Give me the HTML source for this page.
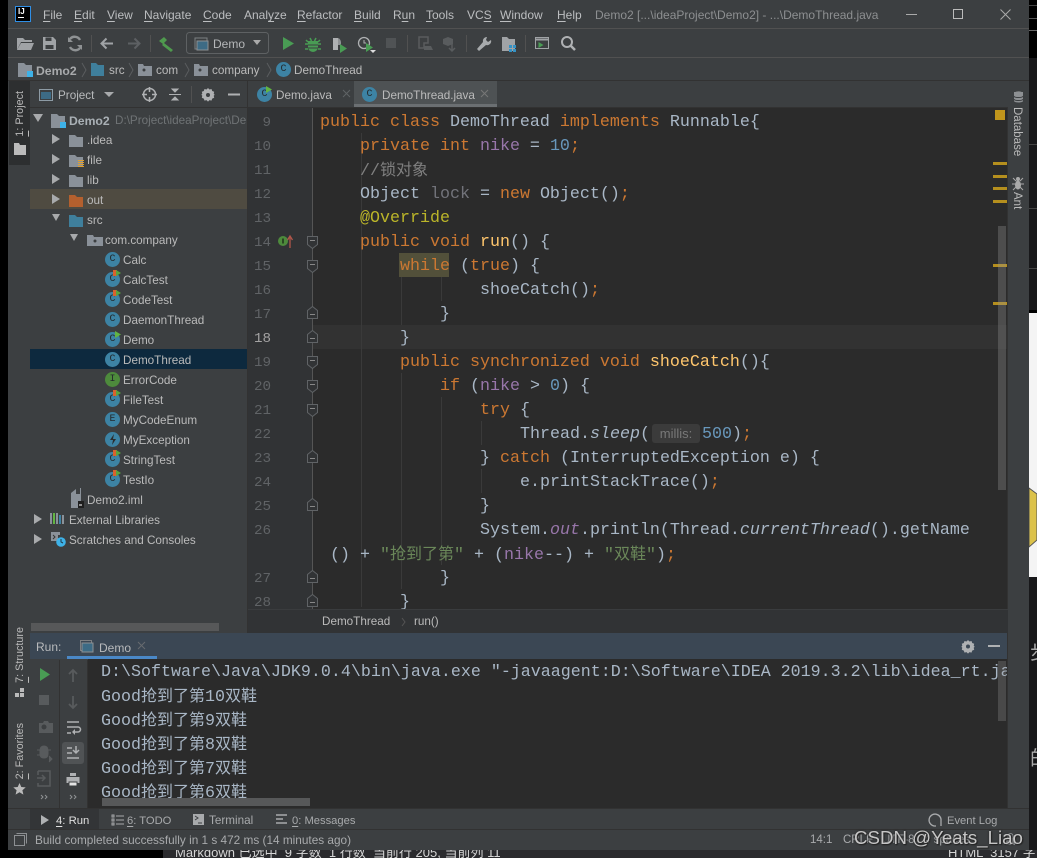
<!DOCTYPE html>
<html><head><meta charset="utf-8"><style>
html,body{margin:0;padding:0;background:#000;width:1037px;height:858px;overflow:hidden}
*{box-sizing:border-box}
#r{position:absolute;left:0;top:0;width:1037px;height:858px;overflow:hidden;font-family:"Liberation Sans","Noto Sans CJK SC",sans-serif}
.a{position:absolute}
.t{position:absolute;white-space:pre;font-size:11.7px;line-height:20px;color:#bbb;margin-top:1px}
.m{top:5px;color:#bcbec0;font-size:12px;margin-top:0}
u{text-decoration:underline;text-underline-offset:2px}
.c{position:absolute;white-space:pre;left:0;margin-top:2px;font-family:"Liberation Mono","Noto Sans CJK SC",monospace;font-size:16.67px;line-height:24px;color:#a9b7c6}
.c i,.c b{font-weight:400}
.k{color:#cc7832}.s{color:#6a8759}.f{color:#9876aa}.n{color:#6897bb}.y{color:#ffc66d}.an{color:#bbb529}.g{color:#808080}
.z{font-size:16px}
.ln{position:absolute;left:240px;width:31px;margin-top:1px;text-align:right;font-family:"Liberation Mono",monospace;font-size:14.2px;line-height:24px;color:#606366}
.i{position:absolute;left:0;top:0;overflow:visible}
.ci{position:absolute;width:15px;height:15px;border-radius:50%;background:#3d83a4;color:#24292c;font:10px/15px "Liberation Mono",monospace;text-align:center}
.ci.gr{background:#4d8a3c}
.bd{position:absolute;left:8px;top:-2px;width:8px;height:6px}
.bd:before{content:"";position:absolute;left:0;top:0;width:4px;height:6px;background:#d8622e}
.bd:after{content:"";position:absolute;right:0;top:0;border-left:5px solid #58a53d;border-top:3px solid transparent;border-bottom:3px solid transparent}
.v{position:absolute;writing-mode:vertical-rl;transform:rotate(180deg);white-space:pre;font-size:10.8px;color:#bbb;line-height:14px}
.mk{position:absolute;left:993px;width:14px;height:3px;background:#b58f1e}
.ig{position:absolute;width:1px;background:#3a3a3a}
.cn{position:absolute;left:101px;margin-top:2px;white-space:pre;font-family:"Liberation Mono","Noto Sans CJK SC",monospace;font-size:16.67px;line-height:24px;color:#a9b7c6}
.st{position:absolute;white-space:pre;font-size:11.8px;line-height:20px;color:#a8aaac;top:830px}
</style></head><body><div id="r">

<!-- outside window backdrop -->
<div class="a" style="left:1029px;top:0;width:8px;height:58px;background:#000"></div>
<div class="a" style="left:1029px;top:5px;width:8px;height:1px;background:#444"></div>
<div class="a" style="left:1029px;top:18px;width:8px;height:1px;background:#555"></div>
<div class="a" style="left:1029px;top:30px;width:8px;height:1px;background:#666"></div>
<div class="a" style="left:1029px;top:58px;width:8px;height:252px;background:#18181a"></div>
<div class="a" style="left:1029px;top:144px;width:8px;height:1px;background:#444"></div>
<div class="a" style="left:1029px;top:208px;width:8px;height:1px;background:#444"></div>
<div class="a" style="left:1029px;top:268px;width:8px;height:1px;background:#444"></div>
<div class="a" style="left:1029px;top:313px;width:8px;height:264px;background:#f4f4f4"></div>
<svg class="a" style="left:1029px;top:485px" width="8" height="66"><path d="M0 3L8 9V55L0 62Z" fill="#dcc24a" stroke="#555" stroke-width="1"/></svg>
<div class="a" style="left:1029px;top:577px;width:8px;height:281px;background:#18181a"></div>
<div class="a" style="left:1030px;top:639px;width:7px;height:24px;color:#aaa;font:20px/24px 'Noto Sans CJK SC',sans-serif;overflow:hidden">步</div>
<div class="a" style="left:1030px;top:745px;width:7px;height:24px;color:#aaa;font:20px/24px 'Noto Sans CJK SC',sans-serif;overflow:hidden">的</div>
<div class="a" style="left:163px;top:850px;width:874px;height:8px;background:#2b2b2e"></div>
<div class="t" style="left:175px;top:850px;margin:0;height:8px;overflow:hidden;color:#d5d5d5;font-size:13px;line-height:8px;width:400px"><span style="position:relative;top:-1px">Markdown 已选中  9 字数  1 行数  当前行 205, 当前列 11</span></div>
<div class="t" style="left:948px;top:850px;margin:0;height:8px;overflow:hidden;color:#d5d5d5;font-size:13px;line-height:8px;width:89px"><span style="position:relative;top:-1px">HTML  3157 字</span></div>

<!-- window base -->
<div class="a" style="left:8px;top:0;width:1021px;height:850px;background:#3c3f41"></div>
<div class="a" style="left:8px;top:28px;width:1021px;height:1px;background:#515151"></div>
<div class="a" style="left:8px;top:57px;width:1021px;height:1px;background:#515151"></div>
<div class="a" style="left:8px;top:80px;width:1021px;height:1px;background:#323232"></div>

<!-- title bar -->
<div class="a" style="left:15px;top:6px;width:16px;height:16px;background:#000;border:1px solid #2f8fe6"></div>
<div class="a" style="left:18px;top:7px;color:#fff;font:bold 8px/10px 'Liberation Sans',sans-serif;white-space:pre">IJ</div>
<div class="a" style="left:18px;top:17px;width:6px;height:1px;background:#fff"></div>
<div class="t m" style="left:43px"><u>F</u>ile</div>
<div class="t m" style="left:74px"><u>E</u>dit</div>
<div class="t m" style="left:107px"><u>V</u>iew</div>
<div class="t m" style="left:144px"><u>N</u>avigate</div>
<div class="t m" style="left:203px"><u>C</u>ode</div>
<div class="t m" style="left:244px">Anal<u>y</u>ze</div>
<div class="t m" style="left:297px"><u>R</u>efactor</div>
<div class="t m" style="left:354px"><u>B</u>uild</div>
<div class="t m" style="left:393px">R<u>u</u>n</div>
<div class="t m" style="left:426px"><u>T</u>ools</div>
<div class="t m" style="left:467px">VC<u>S</u></div>
<div class="t m" style="left:500px"><u>W</u>indow</div>
<div class="t m" style="left:557px"><u>H</u>elp</div>
<div class="t m" style="left:595px;color:#8d8f91">Demo2 [...\ideaProject\Demo2] - ...\DemoThread.java</div>
<svg class="i" width="1037" height="58" fill="none">
<path d="M906 14.5H917" stroke="#aaa"/><rect x="953.5" y="9.5" width="9" height="9" stroke="#bbb"/>
<path d="M1000.5 9.5L1010.5 19.5M1010.5 9.5L1000.5 19.5" stroke="#aaa"/>
<!-- toolbar -->
<path d="M17 38h6l2 2h7v2H21l-4 8z" fill="#a0a3a6"/><path d="M21 43h13l-3 7H17z" fill="#a0a3a6"/>
<path d="M43 37h10l3 3v10H43z" fill="#a0a3a6"/><rect x="45.500" y="37.500" width="6" height="3.500" fill="#3c3f41"/><rect x="45.500" y="45" width="8" height="4" fill="#3c3f41"/>
<path d="M80 40a6 6 0 0 0-10-1M70 47a6 6 0 0 0 10 1" stroke="#8f9294" stroke-width="2.400"/><path d="M68 37v5h5zM82 50v-5h-5z" fill="#8f9294"/>
<path d="M113 43.500h-11M106.500 38.500l-5 5 5 5" stroke="#a0a3a6" stroke-width="2"/>
<path d="M128 43.500h11M134.500 38.500l5 5-5 5" stroke="#5d6063" stroke-width="2"/>
<path d="M159 41l5-4 3 3-4 4zM164 43l9 7-2 2-9-7z" fill="#4f9a4e"/>
<rect x="186.500" y="32.500" width="82" height="21" rx="3" stroke="#5e6163"/>
<rect x="195" y="38" width="12" height="11" stroke="#7d8083"/><rect x="197" y="41" width="11" height="9" fill="#3d6b85" stroke="#8d9093"/>
<path d="M253 40h8l-4 5z" fill="#aaa"/>
<path d="M283 37l11 6.500-11 6.500z" fill="#499c54"/>
<path d="M308 41h10v6a5 5 0 0 1-10 0z" fill="#499c54"/><path d="M310 38l1.500 3M316 38l-1.500 3M305 44h3M318 44h3M305 49h3M318 49h3M306 40l2 2M320 40l-2 2" stroke="#499c54" stroke-width="1.500"/><path d="M308 45h10M308 48h10" stroke="#3c3f41"/>
<path d="M333 38h5v12h-5z" fill="#afb1b3"/><path d="M338 38a5 5 0 0 1 3 4v3h-3z" fill="#8f9294"/><path d="M340 44l7 4.500-7 4.500z" fill="#499c54"/>
<circle cx="364" cy="43" r="5.500" stroke="#afb1b3" stroke-width="1.300"/><path d="M364 40v3h2" stroke="#afb1b3"/><path d="M366 43l7 4.500-7 4.500z" fill="#499c54"/><path d="M370 50h6l-3 3z" fill="#ddd"/>
<rect x="386" y="38" width="10" height="10" fill="#505355"/>
<path d="M419 37h9v6h-4v5h-5z" stroke="#595c5e" stroke-width="1.500"/><path d="M424 46h7l2 4h-9z" fill="#595c5e"/>
<path d="M443 39l5-2 5 2v5l-5 2-5-2z" fill="#595c5e"/><path d="M452 44v7M449 48l3 3 3-3" stroke="#595c5e" stroke-width="1.500"/>
<path d="M487 37a4 4 0 0 0-4 5l-6 7 2 2 7-6a4 4 0 0 0 5-5l-3 2-2-2z" fill="#a8abad"/>
<path d="M502 37h5l2 2h6v12h-13z" fill="#a0a3a6"/><rect x="509" y="45" width="3" height="3" fill="#3592c4"/><rect x="513" y="45" width="3" height="3" fill="#3592c4"/><rect x="513" y="49" width="3" height="3" fill="#3592c4"/><rect x="509" y="49" width="3" height="3" fill="#3592c4"/>
<rect x="535.500" y="37.500" width="13" height="11" stroke="#a0a3a6"/><path d="M535.500 39.500h13" stroke="#a0a3a6" stroke-width="2"/><path d="M538.500 42l5 3-5 3z" fill="#499c54"/>
<circle cx="567" cy="42" r="5" stroke="#afb1b3" stroke-width="2"/><path d="M571 46l4 4" stroke="#afb1b3" stroke-width="2.500"/>
<path d="M91.500 35v17M150.500 35v17M407.500 35v17M466.500 35v17M525.500 35v17" stroke="#515151"/>
</svg>
<div class="t" style="left:213px;top:33px;color:#b5b7b9;font-size:12px">Demo</div>

<!-- breadcrumb -->
<svg class="i" width="400" height="82" fill="none">
<path d="M18 63h6l2 2h6v12H18z" fill="#8a9199"/><rect x="27" y="71" width="6" height="6" fill="#3eb2e8"/>
<path d="M91 63h5l2 2h6v11H91z" fill="#3f7f9c"/>
<path d="M138 64h5l1 2h8v10h-14z" fill="#8a9199"/><circle cx="144" cy="70" r="1.500" fill="#3c3f41"/>
<path d="M194 64h5l1 2h8v10h-14z" fill="#8a9199"/><circle cx="200" cy="70" r="1.500" fill="#3c3f41"/>
<path d="M82 63l4 7-4 7M129 63l4 7-4 7M185 63l4 7-4 7M267 63l4 7-4 7" stroke="#5a5d5f"/>
</svg>
<div class="t" style="left:36px;top:60px;font-weight:bold;font-size:12.2px;color:#a8aaac">Demo2</div>
<div class="t" style="left:109px;top:60px">src</div>
<div class="t" style="left:156px;top:60px">com</div>
<div class="t" style="left:212px;top:60px">company</div>
<div class="ci" style="left:276px;top:62px">C</div>
<div class="t" style="left:294px;top:60px">DemoThread</div>

<!-- left strip -->
<div class="a" style="left:8px;top:81px;width:22px;height:769px;background:#3c3f41"></div>
<div class="a" style="left:9px;top:81px;width:21px;height:84px;background:#2d2f30"></div>
<div class="v" style="left:13px;top:91px"><u>1</u>: Project</div>
<svg class="i" width="30" height="170"><path d="M14 143h5l1 2h6v10H14z" fill="#bbb"/></svg>
<div class="v" style="left:13px;top:627px"><u>7</u>: Structure</div>
<svg class="i" style="top:0" width="30" height="800"><rect x="15" y="693" width="4" height="4" fill="#bbb"/><rect x="20" y="693" width="4" height="4" fill="#bbb"/><rect x="20" y="688" width="4" height="4" fill="#bbb"/>
<path d="M19.500 783l1.800 4 4.400.4-3.300 2.900 1 4.300-3.900-2.300-3.900 2.300 1-4.300-3.300-2.900 4.400-.4z" fill="#bbb"/></svg>
<div class="v" style="left:13px;top:723px"><u>2</u>: Favorites</div>

<!-- project panel -->
<div class="a" style="left:30px;top:81px;width:217px;height:552px;background:#3c3f41"></div>
<div class="a" style="left:30px;top:107px;width:999px;height:1px;background:#323232"></div>
<div class="a" style="left:30px;top:189px;width:217px;height:20px;background:#4f4b41"></div>
<div class="a" style="left:30px;top:349px;width:217px;height:20px;background:#0d293e"></div>
<div class="a" style="left:247px;top:81px;width:1px;height:552px;background:#323232"></div>
<svg class="i" width="260" height="560" fill="none">
<rect x="39.500" y="89.500" width="13" height="11" stroke="#8d9ba5"/><rect x="41" y="92" width="10" height="7" fill="#3d6b85"/>
<path d="M104 92h10l-5 5z" fill="#a8aaac"/>
<circle cx="149.500" cy="94.500" r="6" stroke="#afb1b3" stroke-width="1.500"/><path d="M149.500 87v5M149.500 97v5M142 94.500h5M152 94.500h5" stroke="#afb1b3" stroke-width="1.500"/>
<path d="M169 94.500h12M172 89h6l-3 3zM172 100h6l-3-3z" stroke="#afb1b3" fill="#afb1b3"/>
<path d="M191.500 86v17" stroke="#515151"/>
<path d="M208 88l1.500 1.500 2-.5.700 2 2 .8-.5 2 1 1-1 1 .5 2-2 .8-.7 2-2-.5-1.500 1.500-1.500-1.500-2 .5-.7-2-2-.8.500-2-1-1 1-1-.5-2 2-.8.700-2 2 .5z" fill="#afb1b3"/><circle cx="208" cy="95" r="2" fill="#3c3f41"/>
<path d="M228 94.500h12" stroke="#afb1b3" stroke-width="2"/>
<!-- arrows -->
<path d="M33 114h10l-5 8z" fill="#a8aaac"/>
<path d="M52 134l8 5-8 5zM52 154l8 5-8 5zM52 174l8 5-8 5zM52 194l8 5-8 5z" fill="#a8aaac"/>
<path d="M52 214h8l-4 7zM70 234h8l-4 7z" fill="#a8aaac"/>
<path d="M34 514l8 5-8 5zM34 534l8 5-8 5z" fill="#a8aaac"/>
<!-- folders -->
<path d="M51 114h6l2 2h6v12H51z" fill="#8a9199"/><rect x="60" y="122" width="6" height="6" fill="#3eb2e8"/>
<path d="M69 135h6l2 2h6v10H69z" fill="#8a9199"/>
<path d="M69 155h6l2 2h6v10H69z" fill="#8a9199"/><path d="M78 160.500h6M78 162.500h6M78 164.500h6M78 166.500h6" stroke="#e0a030"/>
<path d="M69 175h6l2 2h6v10H69z" fill="#8a9199"/>
<path d="M69 195h6l2 2h6v10H69z" fill="#b4602e"/>
<path d="M69 215h6l2 2h6v10H69z" fill="#3f7f9c"/>
<path d="M87 235h6l1 2h9v9H87z" fill="#8a9199"/><circle cx="95" cy="241" r="1.500" fill="#3c3f41"/>
<!-- iml -->
<path d="M71 493l5-4v5h4v-6h1v20H71z" fill="#8a9199"/><rect x="78" y="501" width="6" height="7" fill="#1f1f1f"/><path d="M79 505h3" stroke="#fff"/>
<path d="M51 513v11M54 513v11M57 513v11M60 515v9M63 515v9" stroke="#8a9199" stroke-width="2"/><path d="M54 513v11" stroke="#62b543" stroke-width="2"/><path d="M60 515v9" stroke="#3d83a4" stroke-width="2"/>
<path d="M51 532h9v3h-9v-3zM51 535h7v6h-7z" fill="#8a9199"/><path d="M53 535l2 2-2 2" stroke="#333"/><circle cx="61" cy="542" r="4.800" fill="#3eb2e8"/><path d="M61 539v3l2 1" stroke="#1f3a4a"/>
</svg>
<div class="t" style="left:58px;top:85px;color:#b8babc">Project</div>

<div class="t" style="left:69px;top:110px;font-weight:bold;font-size:12.2px;color:#a9b0b5">Demo2</div>
<div class="t" style="left:115px;top:110px;width:132px;overflow:hidden;color:#6f7375;font-size:11.7px">D:\Project\ideaProject\Demo2</div>
<div class="t" style="left:87px;top:130px">.idea</div>
<div class="t" style="left:87px;top:150px">file</div>
<div class="t" style="left:87px;top:170px">lib</div>
<div class="t" style="left:87px;top:190px">out</div>
<div class="t" style="left:87px;top:210px">src</div>
<div class="t" style="left:105px;top:230px">com.company</div>
<div class="ci" style="left:105px;top:252px">C</div><div class="t" style="left:123px;top:250px">Calc</div>
<div class="ci" style="left:105px;top:272px">C<span class="bd"></span></div><div class="t" style="left:123px;top:270px">CalcTest</div>
<div class="ci" style="left:105px;top:292px">C<span class="bd"></span></div><div class="t" style="left:123px;top:290px">CodeTest</div>
<div class="ci" style="left:105px;top:312px">C</div><div class="t" style="left:123px;top:310px">DaemonThread</div>
<div class="ci" style="left:105px;top:332px">C</div><svg class="i" width="125" height="345"><path d="M115 331l6 3.500-6 3.500z" fill="#62b543"/></svg><div class="t" style="left:123px;top:330px">Demo</div>
<div class="ci" style="left:105px;top:352px">C</div><div class="t" style="left:123px;top:350px">DemoThread</div>
<div class="ci gr" style="left:105px;top:372px">I</div><div class="t" style="left:123px;top:370px">ErrorCode</div>
<div class="ci" style="left:105px;top:392px">C<span class="bd"></span></div><div class="t" style="left:123px;top:390px">FileTest</div>
<div class="ci" style="left:105px;top:412px">E</div><div class="t" style="left:123px;top:410px">MyCodeEnum</div>
<div class="ci" style="left:105px;top:432px"></div><svg class="i" width="125" height="450"><path d="M114 434l-4 6h3l-1 5 4-6h-3z" fill="#2b2d2e"/></svg><div class="t" style="left:123px;top:430px">MyException</div>
<div class="ci" style="left:105px;top:452px">C<span class="bd"></span></div><div class="t" style="left:123px;top:450px">StringTest</div>
<div class="ci" style="left:105px;top:472px">C<span class="bd"></span></div><div class="t" style="left:123px;top:470px">TestIo</div>
<div class="t" style="left:87px;top:490px">Demo2.iml</div>
<div class="t" style="left:69px;top:510px">External Libraries</div>
<div class="t" style="left:69px;top:530px">Scratches and Consoles</div>
<div class="a" style="left:31px;top:623px;width:188px;height:8px;background:#575859"></div>

<!-- tabs -->
<div class="a" style="left:248px;top:81px;width:781px;height:26px;background:#3c3f41"></div>
<div class="a" style="left:354px;top:81px;width:143px;height:26px;background:#4e5254"></div>
<div class="a" style="left:354px;top:104px;width:143px;height:3px;background:#6b6f72"></div>
<div class="ci" style="left:257px;top:87px">C</div>
<svg class="i" width="500" height="100" fill="none"><path d="M266 86l6 3.500-6 3.500z" fill="#62b543"/><path d="M343 90l7 7M350 90l-7 7" stroke="#5f6365"/><path d="M481 90l7 7M488 90l-7 7" stroke="#777"/></svg>
<div class="t" style="left:276px;top:85px">Demo.java</div>
<div class="ci" style="left:362px;top:87px;background:#3d83a4">C</div>
<div class="t" style="left:382px;top:85px">DemoThread.java</div>

<!-- editor -->
<div class="a" style="left:248px;top:108px;width:65px;height:501px;background:#313335"></div>
<div class="a" id="ed" style="left:313px;top:108px;width:695px;height:501px;background:#2b2b2b"></div>
<div class="a" style="left:313px;top:325px;width:695px;height:24px;background:#323232"></div>
<div class="a" style="left:399px;top:253px;width:50px;height:24px;background:#52503a"></div>
<div class="ig" style="left:361px;top:133px;height:474px"></div>
<div class="ig" style="left:401px;top:277px;height:48px"></div>
<div class="ig" style="left:441px;top:277px;height:24px"></div>
<div class="ig" style="left:401px;top:373px;height:216px"></div>
<div class="ig" style="left:441px;top:397px;height:168px"></div>
<div class="ig" style="left:481px;top:421px;height:24px"></div>
<div class="ig" style="left:481px;top:469px;height:24px"></div>

<div class="a" style="left:0;top:0;width:998px;height:609px;overflow:hidden;pointer-events:none">
<div class="ln" style="top:110px">9</div><div class="ln" style="top:134px">10</div><div class="ln" style="top:158px">11</div><div class="ln" style="top:182px">12</div><div class="ln" style="top:206px">13</div><div class="ln" style="top:230px">14</div><div class="ln" style="top:254px">15</div><div class="ln" style="top:278px">16</div><div class="ln" style="top:302px">17</div><div class="ln" style="top:326px;color:#a4a3a3">18</div><div class="ln" style="top:350px">19</div><div class="ln" style="top:374px">20</div><div class="ln" style="top:398px">21</div><div class="ln" style="top:422px">22</div><div class="ln" style="top:446px">23</div><div class="ln" style="top:470px">24</div><div class="ln" style="top:494px">25</div><div class="ln" style="top:518px">26</div><div class="ln" style="top:566px">27</div><div class="ln" style="top:590px">28</div>

<div class="c" style="top:109px;left:320px"><span class="k">public class </span>DemoThread <span class="k">implements </span>Runnable{</div>
<div class="c" style="top:133px;left:360px"><span class="k">private int </span><span class="f">nike</span> = <span class="n">10</span><span class="k">;</span></div>
<div class="c g" style="top:157px;left:360px;color:#808080">//<span class="z">锁对象</span></div>
<div class="c" style="top:181px;left:360px">Object <span style="color:#72737a">lock</span> = <span class="k">new </span>Object()<span class="k">;</span></div>
<div class="c an" style="top:205px;left:360px;color:#bbb529">@Override</div>
<div class="c" style="top:229px;left:360px"><span class="k">public void </span><span class="y">run</span>() {</div>
<div class="c" style="top:253px;left:400px"><span class="k">while </span>(<span class="k">true</span>) {</div>
<div class="c" style="top:277px;left:480px">shoeCatch()<span class="k">;</span></div>
<div class="c" style="top:301px;left:440px">}</div>
<div class="c" style="top:325px;left:400px">}</div>
<div class="c" style="top:349px;left:400px"><span class="k">public synchronized void </span><span class="y">shoeCatch</span>(){</div>
<div class="c" style="top:373px;left:440px"><span class="k">if </span>(<span class="f">nike</span> &gt; <span class="n">0</span>) {</div>
<div class="c" style="top:397px;left:480px"><span class="k">try </span>{</div>
<div class="c" style="top:421px;left:520px">Thread.<i>sleep</i>(</div>
<div class="a" style="left:652px;top:424px;width:48px;height:19px;background:#3b3b3b;border-radius:3px;color:#787878;font-size:13px;line-height:19px;text-align:center">millis:</div>
<div class="c" style="top:421px;left:702px"><span class="n">500</span>)<span class="k">;</span></div>
<div class="c" style="top:445px;left:480px">} <span class="k">catch </span>(InterruptedException e) {</div>
<div class="c" style="top:469px;left:520px">e.printStackTrace()<span class="k">;</span></div>
<div class="c" style="top:493px;left:480px">}</div>
<div class="c" style="top:517px;left:480px">System.<i class="f">out</i>.println(Thread.<i>currentThread</i>().getName</div>
<div class="c" style="top:541px;left:330px">() + <span class="s">"<span class="z">抢到了第</span>"</span> + (<span class="f">nike</span>--) + <span class="s">"<span class="z">双鞋</span>"</span>)<span class="k">;</span></div>
<div class="c" style="top:565px;left:440px">}</div>
<div class="c" style="top:589px;left:400px">}</div>
</div>

<svg class="i" width="340" height="609" fill="none" style="overflow:hidden">
<path d="M312.500 108V609" stroke="#555"/>
<g fill="#313335" stroke="#606366">
<path d="M307.500 236.500h10v8l-5 4-5-4z"/><path d="M307.500 260.500h10v8l-5 4-5-4z"/>
<path d="M307.500 318.500v-8l5-4 5 4v8z"/><path d="M307.500 342.500v-8l5-4 5 4v8z"/>
<path d="M307.500 356.500h10v8l-5 4-5-4z"/><path d="M307.500 380.500h10v8l-5 4-5-4z"/><path d="M307.500 404.500h10v8l-5 4-5-4z"/>
<path d="M307.500 462.500v-8l5-4 5 4v8z"/><path d="M307.500 510.500v-8l5-4 5 4v8z"/>
<path d="M307.500 582.500v-8l5-4 5 4v8z"/><path d="M307.500 606.500v-8l5-4 5 4v8z"/>
</g>
<path d="M310 240.500h5M310 264.500h5M310 314.500h5M310 338.500h5M310 360.500h5M310 384.500h5M310 408.500h5M310 458.500h5M310 506.500h5M310 578.500h5M310 602.500h5" stroke="#888"/>
<circle cx="283" cy="241" r="5" fill="#4d8a3c"/><path d="M283 238.500v5" stroke="#1f2f1a" stroke-width="1.500"/>
<path d="M290 248v-11M287.500 240l2.500-4 2.500 4" stroke="#b0564a" stroke-width="1.300"/>
</svg>

<div class="a" style="left:995px;top:110px;width:10px;height:10px;background:#c0951c"></div>
<div class="mk" style="top:162px"></div><div class="mk" style="top:175px"></div><div class="mk" style="top:187px"></div><div class="mk" style="top:200px"></div><div class="mk" style="top:264px"></div><div class="mk" style="top:302px"></div>
<div class="a" style="left:998px;top:226px;width:8px;height:264px;background:rgba(150,150,150,.32)"></div>
<div class="a" style="left:1007px;top:108px;width:1px;height:501px;background:#323232"></div>

<!-- editor breadcrumb -->
<div class="a" style="left:248px;top:609px;width:781px;height:24px;background:#313335;border-top:1px solid #3a3c3e"></div>
<div class="t" style="left:322px;top:611px;font-size:11.7px">DemoThread</div>
<svg class="i" width="420" height="630" fill="none"><path d="M402 618l3 4-3 4" stroke="#555"/></svg>
<div class="t" style="left:414px;top:611px;font-size:11.7px">run()</div>

<!-- right strip -->
<div class="a" style="left:1008px;top:81px;width:21px;height:769px;background:#3c3f41"></div>
<svg class="i" width="1037" height="220" fill="none"><ellipse cx="1018.500" cy="93" rx="4.500" ry="1.500" fill="#a8aaac"/><path d="M1014 92v9c0 2 9 2 9 0v-9" fill="#8d9093"/><path d="M1014 96c0 2 9 2 9 0M1014 99c0 2 9 2 9 0" stroke="#3c3f41"/>
<circle cx="1018" cy="179" r="2" fill="#aaa"/><ellipse cx="1018" cy="185" rx="3" ry="4.500" fill="#aaa"/><path d="M1013 178l3 3M1023 178l-3 3M1012 184h3M1024 184h-3M1013 190l3-3M1023 190l-3-3" stroke="#aaa"/></svg>
<div class="v" style="left:1010px;top:107px;transform:none;font-size:11.5px">Database</div>
<div class="v" style="left:1010px;top:192px;transform:none;font-size:11.5px">Ant</div>

<!-- run panel -->
<div class="a" style="left:30px;top:633px;width:977px;height:26px;background:#3b4754"></div>
<div class="a" style="left:67px;top:656px;width:90px;height:3px;background:#4a88c7"></div>
<div class="t" style="left:36px;top:636px;color:#b8babc;font-size:12px">Run:</div>
<svg class="i" width="160" height="660" fill="none"><rect x="80.500" y="640.500" width="11" height="10" stroke="#7d8083"/><rect x="82" y="643" width="11" height="9" fill="#3d6b85" stroke="#8d9093"/><path d="M138 642l7 7M145 642l-7 7" stroke="#676b6f"/></svg>
<div class="t" style="left:99px;top:637px;color:#b8babc;font-size:12px">Demo</div>
<svg class="i" width="1037" height="660" fill="none"><path d="M968 640l1.500 1.500 2-.5.700 2 2 .8-.5 2 1 1-1 1 .5 2-2 .8-.7 2-2-.5-1.500 1.500-1.500-1.500-2 .5-.7-2-2-.8.500-2-1-1 1-1-.5-2 2-.8.700-2 2 .5z" fill="#afb1b3"/><circle cx="968" cy="646.500" r="2" fill="#3b4754"/><path d="M988 646h12" stroke="#afb1b3" stroke-width="2"/></svg>

<div class="a" style="left:30px;top:659px;width:58px;height:149px;background:#3c3f41"></div>
<div class="a" style="left:59px;top:660px;width:1px;height:148px;background:#323232"></div>
<div class="a" style="left:87px;top:660px;width:1px;height:148px;background:#323232"></div>
<div class="a" style="left:88px;top:659px;width:919px;height:149px;background:#2b2b2b;overflow:hidden"></div>
<div class="a" style="left:62px;top:742px;width:22px;height:22px;background:#505355;border-radius:3px"></div>
<svg class="i" width="90" height="810" fill="none">
<path d="M40 668l10 6.500-10 6.500z" fill="#499c54"/>
<rect x="39" y="695" width="10" height="10" fill="#585b5d"/>
<path d="M39 723h4l1-2h4l1 2h4v10H39z" fill="#585b5d"/><circle cx="44" cy="727" r="2.500" fill="#3c3f41"/>
<path d="M44 746c-3 0-4 2-4 5v3c0 3 2 4 4 4s4-1 4-4v-3c0-3-1-5-4-5zM37 750h3M37 755h3M48 750h3M49 756l3 3-3 3" fill="#585b5d" stroke="#585b5d"/>
<path d="M38 771h12v15H38v-3M38 775v-4" stroke="#585b5d" stroke-width="1.500"/><path d="M37 778h7M42 775l3 3-3 3" stroke="#585b5d" stroke-width="1.500"/>
<path d="M73 670v12M69 674l4-4 4 4" stroke="#585b5d" stroke-width="1.800"/>
<path d="M73 696v12M69 704l4 4 4-4" stroke="#585b5d" stroke-width="1.800"/>
<path d="M67 722h12M67 727h11a2.500 2.500 0 0 1 0 5h-4M67 733h4" stroke="#afb1b3" stroke-width="1.500"/><path d="M75 729l-3 3 3 3z" fill="#afb1b3"/>
<path d="M67 748h5M67 753h5M67 758h12M76 746v7M73 750l3 3 3-3" stroke="#afb1b3" stroke-width="1.500"/>
<rect x="70" y="773" width="6" height="3" fill="#afb1b3"/><rect x="66.500" y="777" width="13" height="6" fill="#afb1b3"/><rect x="69" y="782" width="8" height="4" fill="#e4e4e4" stroke="#3c3f41"/>
<path d="M41 795l2 2-2 2M45 795l2 2-2 2M70 795l2 2-2 2M74 795l2 2-2 2" stroke="#8f9294"/>
</svg>

<div class="cn" style="top:659px;width:906px;overflow:hidden">D:\Software\Java\JDK9.0.4\bin\java.exe "-javaagent:D:\Software\IDEA 2019.3.2\lib\idea_rt.jar</div>
<div class="cn" style="top:683px">Good<span class="z">抢到了第</span>10<span class="z">双鞋</span></div>
<div class="cn" style="top:707px">Good<span class="z">抢到了第</span>9<span class="z">双鞋</span></div>
<div class="cn" style="top:731px">Good<span class="z">抢到了第</span>8<span class="z">双鞋</span></div>
<div class="cn" style="top:755px">Good<span class="z">抢到了第</span>7<span class="z">双鞋</span></div>
<div class="a" style="left:88px;top:779px;width:300px;height:27px;overflow:hidden"><div class="cn" style="top:0;left:13px">Good<span class="z">抢到了第</span>6<span class="z">双鞋</span></div></div>
<div class="a" style="left:102px;top:798px;width:208px;height:8px;background:#575859"></div>
<div class="a" style="left:998px;top:661px;width:8px;height:60px;background:rgba(150,150,150,.28)"></div>
<div class="a" style="left:1007px;top:633px;width:1px;height:175px;background:#323232"></div>

<!-- bottom tool tabs -->
<div class="a" style="left:8px;top:808px;width:1021px;height:1px;background:#323232"></div>
<div class="a" style="left:8px;top:829px;width:1021px;height:1px;background:#323232"></div>
<div class="a" style="left:30px;top:809px;width:69px;height:20px;background:#333537"></div>
<svg class="i" width="320" height="830" fill="none">
<path d="M41 815l8 5-8 5z" fill="#afb1b3"/>
<path d="M112 815h2v2h-2zM112 819h2v2h-2zM112 823h2v2h-2zM116 816h8M116 820h8M116 824h8" stroke="#a8aaac"/>
<rect x="193" y="814" width="11" height="11" fill="#a8aaac"/><path d="M195 816l3 2-3 2M198 823h4" stroke="#3c3f41"/>
<path d="M276 815h11M276 819h7M276 823h11" stroke="#a8aaac" stroke-width="1.500"/>
</svg>
<svg class="a" style="left:8px;top:830px" width="20" height="20" fill="none"><rect x="6.500" y="5.500" width="10" height="10" stroke="#8d9093"/><path d="M8.500 3.500h10v10" stroke="#8d9093"/></svg>
<div class="t" style="left:56px;top:810px;font-size:11.3px;color:#e0e0e0"><u>4</u>: Run</div>
<div class="t" style="left:127px;top:810px;font-size:11.2px;color:#a8aaac"><u>6</u>: TODO</div>
<div class="t" style="left:209px;top:810px;font-size:11.7px;color:#a8aaac">Terminal</div>
<div class="t" style="left:292px;top:810px;font-size:11.2px;color:#a8aaac"><u>0</u>: Messages</div>
<svg class="i" width="960" height="830" fill="none"><path d="M936 826h-2a6 6 0 1 1 7-5v5" stroke="#a8aaac" stroke-width="1.300"/></svg>
<div class="t" style="left:947px;top:810px;font-size:11.2px;color:#a8aaac">Event Log</div>

<!-- status bar -->
<div class="st" style="left:35px">Build completed successfully in 1 s 472 ms (14 minutes ago)</div>
<div class="st" style="left:810px;font-size:11.500px">14:1</div>
<div class="st" style="left:843px;font-size:11.500px">CRLF</div>
<div class="st" style="left:882px;font-size:11.500px">UTF-8</div>
<div class="st" style="left:924px;font-size:11.500px">4 spaces</div>
<svg class="i" width="1037" height="850" fill="none"><rect x="1006" y="838" width="9" height="7" fill="#8d9093"/><path d="M1008 838v-2a2.500 2.500 0 0 1 5 0v2" stroke="#8d9093"/></svg>
<div class="a" style="left:854px;top:826px;white-space:pre;font-family:'Liberation Sans',sans-serif;font-size:18.7px;line-height:24px;color:rgba(225,225,225,.85);text-shadow:0 0 2px #222,1px 1px 1px #222">CSDN @Yeats_Liao</div>

</div></body></html>
